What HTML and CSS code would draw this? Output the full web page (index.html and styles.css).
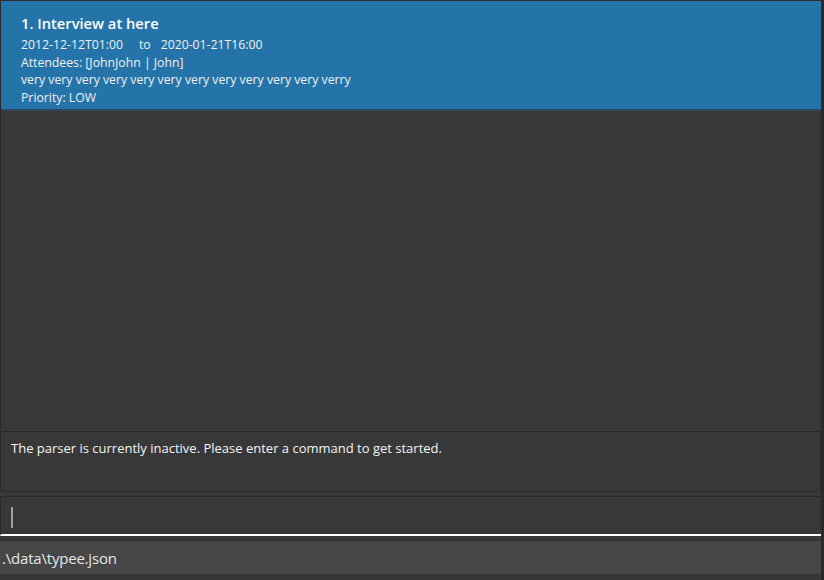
FILE: index.html
```html
<!DOCTYPE html>
<html>
<head>
<meta charset="utf-8">
<link rel="stylesheet" href="styles.css">
</head>
<body>
<div class="app">
  <div class="list">
    <div class="card">
      <div class="title">1. Interview at here</div>
      <div class="line">2012-12-12T01:00<span class="to">to</span>2020-01-21T16:00</div>
      <div class="line">Attendees: [JohnJohn | John]</div>
      <div class="line">very very very very very very very very very very very verry</div>
      <div class="line">Priority: LOW</div>
    </div>
  </div>
  <div class="result">The parser is currently inactive. Please enter a command to get started.</div>
  <div class="command"><span class="caret"></span></div>
  <div class="status">.\data\typee.json</div>
  <div class="foot"></div>
</div>
</body>
</html>
```
FILE: styles.css
```css
html, body {
  margin: 0;
  padding: 0;
  background: #383838;
  width: 824px;
  height: 580px;
  overflow: hidden;
  font-family: "Open Sans", "Noto Sans", sans-serif;
}
.app {
  width: 821px;
  height: 580px;
  border-right: 3px solid #2a2a2a;
  display: flex;
  flex-direction: column;
  background: #383838;
}
.list {
  height: 430px;
  border-left: 1px solid #2a2a2a;
  border-top: 1px solid #2e2e2e;
  box-sizing: border-box;
  flex: none;
}
.card {
  background: #2574a9;
  border-bottom: 2px solid #2d4659;
  padding: 12px 20px 6px;
  height: 110px;
  box-sizing: border-box;
  color: #f2f2f2;
}
.title {
  font-size: 14.7px;
  font-weight: 600;
  color: #fff;
  line-height: 20px;
  margin-bottom: 3px;
}
.line {
  font-size: 12.25px;
  line-height: 17.5px;
  color: #f0f0f0;
}
.to {
  margin: 0 10px 0 16px;
}
.result {
  margin-top: 1px;
  height: 61px;
  box-sizing: border-box;
  border: 1px solid #2a2a2a;
  padding: 7px 10px;
  font-size: 13px;
  color: #f4f4f4;
  flex: none;
}
.command {
  margin-top: 4px;
  height: 40px;
  box-sizing: border-box;
  border-top: 1px solid #2a2a2a;
  border-left: 1px solid #2a2a2a;
  border-bottom: 2px solid #ffffff;
  padding: 10px 10px 0;
  flex: none;
}
.caret {
  display: block;
  width: 2px;
  height: 21px;
  background: #a0a0a0;
}
.status {
  margin-top: 4px;
  height: 33px;
  background: #474747;
  color: #e6e6e6;
  font-size: 15px;
  line-height: 34px;
  padding-left: 2px;
  border-top: 1px solid #2e2e2e;
  flex: none;
  letter-spacing: -0.2px;
}
.foot {
  flex: 1;
  background: #373737;
}
```
